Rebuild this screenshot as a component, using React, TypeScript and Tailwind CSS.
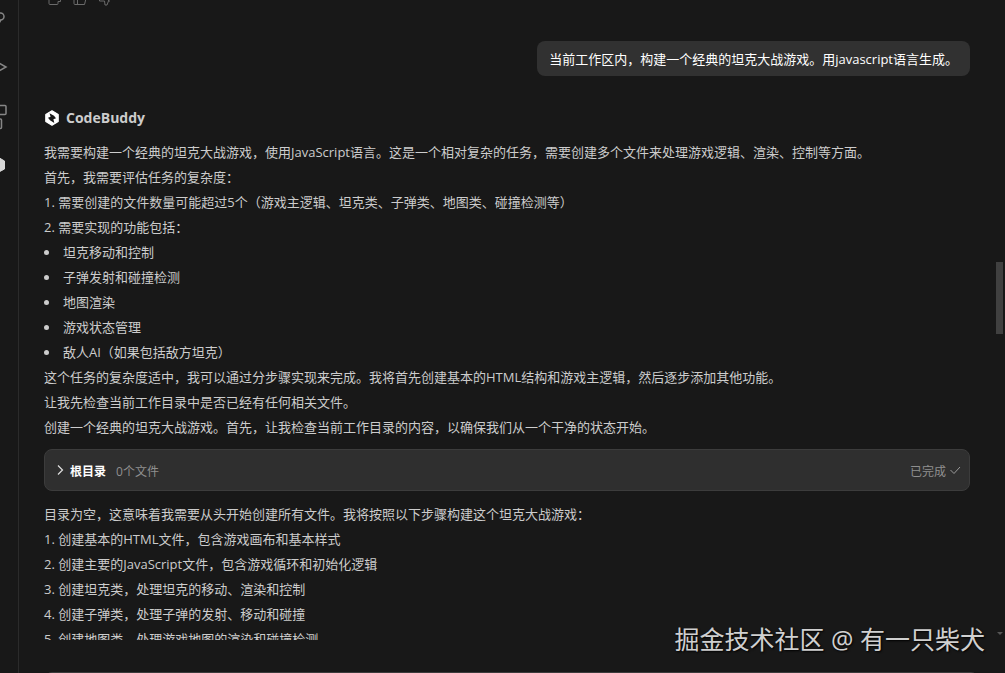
import type { ReactNode } from "react";

const ANALYSIS = [
  "我需要构建一个经典的坦克大战游戏，使用JavaScript语言。这是一个相对复杂的任务，需要创建多个文件来处理游戏逻辑、渲染、控制等方面。",
  "首先，我需要评估任务的复杂度：",
  "1. 需要创建的文件数量可能超过5个（游戏主逻辑、坦克类、子弹类、地图类、碰撞检测等）",
  "2. 需要实现的功能包括：",
];

const FEATURES = [
  "坦克移动和控制",
  "子弹发射和碰撞检测",
  "地图渲染",
  "游戏状态管理",
  "敌人AI（如果包括敌方坦克）",
];

const PLAN = [
  "这个任务的复杂度适中，我可以通过分步骤实现来完成。我将首先创建基本的HTML结构和游戏主逻辑，然后逐步添加其他功能。",
  "让我先检查当前工作目录中是否已经有任何相关文件。",
  "创建一个经典的坦克大战游戏。首先，让我检查当前工作目录的内容，以确保我们从一个干净的状态开始。",
];

const STEPS = [
  "目录为空，这意味着我需要从头开始创建所有文件。我将按照以下步骤构建这个坦克大战游戏：",
  "1. 创建基本的HTML文件，包含游戏画布和基本样式",
  "2. 创建主要的JavaScript文件，包含游戏循环和初始化逻辑",
  "3. 创建坦克类，处理坦克的移动、渲染和控制",
  "4. 创建子弹类，处理子弹的发射、移动和碰撞",
  "5. 创建地图类，处理游戏地图的渲染和碰撞检测",
];

/* ── Activity bar ───────────────────────────────────────────────────── */
function ActivityButton({ label, children }: { label: string; children: ReactNode }) {
  return (
    <button type="button" aria-label={label} className="flex h-12 w-6 items-center justify-end">
      {children}
    </button>
  );
}

function ActivityBar() {
  return (
    <nav className="flex w-[19px] shrink-0 flex-col items-end overflow-hidden border-r border-[#2b2b2b] pr-2.5 text-[#868686]">
      <div className="-mt-1.5 flex flex-col items-end">
        <ActivityButton label="Source control">
          <svg width="24" height="24" viewBox="0 0 24 24" fill="none" stroke="currentColor" strokeWidth="1.5">
            <circle cx="16.500" cy="10.500" r="3.500" />
            <path d="M16.500 14c0 3-3 4-8 4" />
          </svg>
        </ActivityButton>
        <ActivityButton label="Run">
          <svg width="24" height="24" viewBox="0 0 24 24" fill="none" stroke="currentColor" strokeWidth="1.5">
            <path d="M4 3l18 10L4 23" />
          </svg>
        </ActivityButton>
        <ActivityButton label="Extensions">
          <svg className="overflow-visible" width="24" height="24" viewBox="0 0 24 24" fill="none" stroke="currentColor" strokeWidth="1.5">
            <rect x="12.500" y="3.500" width="9.500" height="9" rx="1" />
            <path d="M8 17h8.500a1 1 0 011 1v7.500a1 1 0 01-1 1H2V8h6v18" />
          </svg>
        </ActivityButton>
        <ActivityButton label="CodeBuddy">
          <svg width="24" height="24" viewBox="0 0 24 24" fill="#d7d7d7" stroke="#d7d7d7" strokeLinejoin="round">
            <path d="M12 6l8.500 5v8L12 23.500l-8.500-4.500V11z" />
          </svg>
        </ActivityButton>
      </div>
    </nav>
  );
}

/* ── Messages ───────────────────────────────────────────────────────── */
function Logo() {
  return (
    <svg width="16" height="16" viewBox="0 0 16 16" aria-hidden="true">
      <path d="M8 .8l6.200 3.600v7.200L8 15.200 1.800 11.600V4.400z" fill="#fff" stroke="#fff" strokeWidth="1.2" strokeLinejoin="round" />
      <path d="M5.500 3.300L10 5.800 12 8.200 9.400 9.300 10.300 12.900 6 10.200 4 7.800 6.600 6.700z" fill="#181818" />
    </svg>
  );
}

function Lines({ items }: { items: string[] }) {
  return items.map((line) => <p key={line}>{line}</p>);
}

function MessageActions() {
  return (
    <div className="-mt-2 flex h-3.5 gap-[11px] pl-1 text-[#6a6a6a]">
      <button type="button" aria-label="Copy">
        <svg width="14" height="14" viewBox="0 0 14 14" fill="none" stroke="currentColor">
          <path d="M1 4v7.500a1 1 0 001 1h7a1 1 0 001-1V9.500h2.500V2" />
        </svg>
      </button>
      <button type="button" aria-label="Like">
        <svg width="14" height="14" viewBox="0 0 14 14" fill="none" stroke="currentColor">
          <path d="M1 5v6.500a1 1 0 001 1h9.500l1.500-6M4.500 5v7.500" />
        </svg>
      </button>
      <button type="button" aria-label="Dislike">
        <svg width="14" height="14" viewBox="0 0 14 14" fill="none" stroke="currentColor">
          <path d="M1.500 4v5h5l.5 4h2l1.500-4V2M10.500 9h1.500" />
        </svg>
      </button>
    </div>
  );
}

function ToolCall() {
  return (
    <button
      type="button"
      className="mt-[9px] mb-[11px] flex h-[42px] w-full items-center rounded-lg border border-[#3c3c3c] bg-[#2f2f2f] px-2 text-xs"
    >
      <svg width="16" height="16" viewBox="0 0 16 16" fill="none" stroke="#e0e0e0" strokeWidth="1.2">
        <path d="M5 3.500L9.500 8 5 12.500" />
      </svg>
      <span className="ml-px pt-1 font-bold text-white">根目录</span>
      <span className="ml-2.5 pt-1 text-[#8f8f8f]">0个文件</span>
      <span className="ml-auto pt-1 text-[#8f8f8f]">已完成</span>
      <svg className="ml-[3px]" width="12" height="12" viewBox="0 0 12 12" fill="none" stroke="#9a9a9a">
        <path d="M1.500 6l3.500 3.500L11 3" />
      </svg>
    </button>
  );
}

export default function App() {
  return (
    <div className="relative flex h-screen overflow-hidden bg-[#181818] font-['Open_Sans','Noto_Sans_CJK_SC',sans-serif] text-[13px] leading-[25px] text-[#cccccc]">
      <ActivityBar />

      <main className="flex min-w-0 flex-1 flex-col">
        <div className="flex min-h-0 flex-1">
          <div className="min-w-0 flex-1 overflow-hidden pr-[26px] pl-[25px]">
            <MessageActions />

            <div className="mt-[35px] flex justify-end">
              <p className="rounded-lg bg-[#313131] px-3 pt-1.5 pb-1 text-white">
                当前工作区内，构建一个经典的坦克大战游戏。用javascript语言生成。
              </p>
            </div>

            <article className="mt-[29px]">
              <h2 className="mb-2.5 flex items-center gap-1.5 text-sm leading-[25px] font-bold">
                <Logo />
                CodeBuddy
              </h2>
              <Lines items={ANALYSIS} />
              <ul>
                {FEATURES.map((feature) => (
                  <li key={feature} className="flex items-center gap-3.5">
                    <span className="size-[5px] rounded-full bg-[#cccccc]" />
                    {feature}
                  </li>
                ))}
              </ul>
              <Lines items={PLAN} />
              <ToolCall />
              <Lines items={STEPS} />
            </article>
          </div>

          {/* Scrollbar */}
          <div className="flex w-[9px] shrink-0 flex-col pt-[262px]">
            <div className="h-[72px] w-[7px] bg-[#404040]" />
          </div>
        </div>

        <footer className="h-[33px] shrink-0 overflow-hidden pt-8 pr-[26px] pl-[25px]">
          <div className="h-20 rounded-lg border border-[#3c3c3c]" />
        </footer>
      </main>

      <p className="absolute right-5 bottom-4 text-[25px] leading-9 text-[#d0d0d0] [text-shadow:1px_1px_2px_#000]">
        掘金技术社区 @ 有一只柴犬
      </p>
      <svg className="absolute right-0.5 bottom-9" width="6" height="6" viewBox="0 0 6 6" fill="#555">
        <path d="M0 1h6L3 4z" />
      </svg>
    </div>
  );
}
